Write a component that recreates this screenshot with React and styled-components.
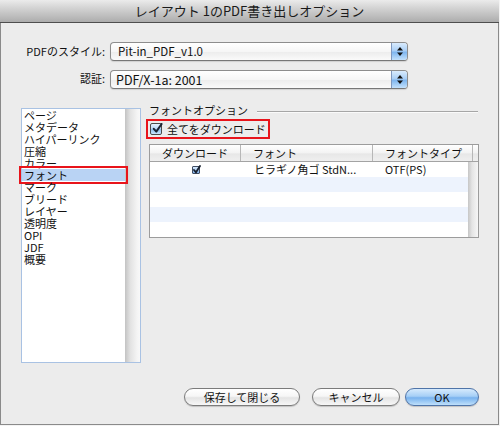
import React from 'react';
import styled, { createGlobalStyle } from 'styled-components';

const Global = createGlobalStyle`
  html, body { margin: 0; padding: 0; background: #f3f3f3; }
  body { font-family: "Noto Sans CJK JP", "DejaVu Sans", sans-serif; color: #111; }
  * { box-sizing: border-box; }
`;

const Window = styled.div`
  width: 499px;
  height: 425px;
  background: #ececec;
  border: 1px solid #8a8a8a;
  border-top: none;
  display: flex;
  flex-direction: column;
`;

const TitleBar = styled.div`
  height: 23px;
  margin: 0 -1px;
  border-bottom: 1px solid #4e4e4e;
  background: linear-gradient(#ebebeb, #d4d4d4 35%, #b9b9b9 80%, #acacac);
  text-align: center;
  font-size: 13px;
  line-height: 22px;
  color: #1a1a1a;
`;

const FormGrid = styled.div`
  display: grid;
  grid-template-columns: 84px 298px;
  column-gap: 5px;
  row-gap: 9px;
  margin: 19px 0 0 20px;
  align-items: center;
`;

const Label = styled.div`
  text-align: right;
  font-size: 11px;
  line-height: 19px;
  margin-top: ${p => p.$up || 0}px;
`;

const Popup = styled.div`
  height: 19px;
  border: 1px solid #8d8d8d;
  border-bottom-color: #777;
  border-radius: 4px;
  background: linear-gradient(#ffffff, #f6f6f6 50%, #ececec 52%, #fafafa);
  box-shadow: 0 1px 1px rgba(0, 0, 0, 0.12);
  display: flex;
  overflow: hidden;
`;

const PopupText = styled.div`
  flex: 1;
  padding-left: ${p => p.$pad}px;
  font-size: ${p => p.$size}px;
  line-height: 17px;
`;

const PopupArrows = styled.div`
  width: 16px;
  border-left: 1px solid #7f98bf;
  background: linear-gradient(#d9ebfd, #aacff6 45%, #7fb6ef 55%, #c3e1fc);
  display: flex;
  align-items: center;
  justify-content: center;
`;

const Main = styled.div`
  display: flex;
  align-items: flex-start;
  gap: 8px;
  margin: 14px 0 0 20px;
`;

const ListBox = styled.div`
  margin-top: 5px;
  width: 120px;
  height: 255px;
  border: 1px solid #a9c2e3;
  background: #fff;
  display: flex;
`;

const ListItems = styled.div`
  flex: 1;
`;

const ListItem = styled.div`
  height: 12px;
  line-height: 12px;
  font-size: 11px;
  padding-left: 2px;
  white-space: nowrap;
  background: ${p => (p.$selected ? '#b9d3f4' : 'transparent')};
  outline: ${p => (p.$selected ? '2px solid #e8141b' : 'none')};
  outline-offset: 1px;
  position: relative;
`;

const ListTrack = styled.div`
  width: 15px;
  background: linear-gradient(to right, #c3c3c3, #e2e2e2 35%, #f4f4f4 80%, #f8f8f8);
`;

const RightPanel = styled.div`
  width: 330px;
  display: flex;
  flex-direction: column;
`;

const GroupHeader = styled.div`
  height: 14px;
  display: flex;
  align-items: center;
  font-size: 11px;
  line-height: 14px;
  padding-right: 1px;
`;

const GroupLine = styled.div`
  flex: 1;
  height: 2px;
  margin-left: 9px;
  margin-top: 4px;
  border-top: 1px solid #a6a6a6;
  border-bottom: 1px solid #fafafa;
`;

const CheckRow = styled.div`
  align-self: flex-start;
  margin: 2px 0 0 -3px;
  height: 20px;
  border: 2px solid #e8141b;
  padding: 0 2px 0 2px;
  display: flex;
  align-items: center;
  gap: 5px;
  font-size: 11px;
  line-height: 14px;
`;

const BigCheck = styled.div`
  width: 12px;
  height: 12px;
  border: 1px solid #4b4b4b;
  border-radius: 2px;
  background: linear-gradient(#e4f1fd, #b6d6f5 50%, #8fc0ee 55%, #c9e3fb);
  position: relative;
`;

const SmallCheck = styled.div`
  width: 8px;
  height: 8px;
  border: 1px solid #3f4c63;
  border-radius: 1px;
  background: linear-gradient(#d9ebfd, #7eaee6);
  position: relative;
`;

const CheckMark = styled.svg`
  position: absolute;
  left: ${p => p.$l}px;
  top: ${p => p.$t}px;
`;

const Table = styled.div`
  margin-top: 5px;
  width: 330px;
  border: 1px solid #9c9c9c;
  background: #fff;
`;

const HeaderRow = styled.div`
  display: grid;
  grid-template-columns: 91px 132px 100px 5px;
  height: 17px;
  border-bottom: 1px solid #a3a3a3;
  background: linear-gradient(#ffffff, #f3f3f3 50%, #e7e7e7 55%, #efefef);
`;

const HeaderCell = styled.div`
  font-size: 11px;
  line-height: 16px;
  border-right: ${p => (p.$last ? 'none' : '1px solid #b7b7b7')};
  text-align: ${p => (p.$center ? 'center' : 'left')};
  padding-left: ${p => p.$pad || 0}px;
  white-space: nowrap;
  overflow: hidden;
`;

const TableBody = styled.div`
  display: flex;
`;

const Rows = styled.div`
  width: 318px;
`;

const Row = styled.div`
  display: grid;
  grid-template-columns: 91px 132px 95px;
  height: 15px;
  background: ${p => (p.$alt ? '#edf3fd' : '#fff')};
`;

const Cell = styled.div`
  font-size: 11px;
  line-height: 15px;
  padding-left: ${p => p.$pad || 0}px;
  display: flex;
  align-items: center;
  justify-content: ${p => (p.$center ? 'center' : 'flex-start')};
  white-space: nowrap;
`;

const TableTrack = styled.div`
  width: 10px;
  background: linear-gradient(to right, #c6c6c6, #e4e4e4 40%, #f6f6f6);
`;

const Footer = styled.div`
  margin-top: auto;
  display: flex;
  justify-content: flex-end;
  padding: 0 19px 18px 0;
`;

const Button = styled.div`
  width: ${p => p.$w}px;
  margin-right: ${p => p.$mr || 0}px;
  height: 18px;
  border-radius: 9px;
  border: 1px solid ${p => (p.$primary ? '#4f74a8' : '#7b7b7b')};
  background: ${p =>
    p.$primary
      ? 'linear-gradient(#d5eafd, #a6cff6 45%, #78b2ee 55%, #bfe0fb)'
      : 'linear-gradient(#ffffff, #f6f6f6 45%, #e4e4e4 55%, #f7f7f7)'};
  box-shadow: 0 1px 1px rgba(0, 0, 0, 0.18);
  font-size: 11px;
  line-height: 16px;
  text-align: center;
`;

const Arrows = () => (
  <svg width="8" height="11" viewBox="0 0 8 11">
    <path d="M4 1 L7 4.5 L1 4.5 Z" fill="#111" />
    <path d="M4 10 L7 6.5 L1 6.5 Z" fill="#111" />
  </svg>
);

const listItems = [
  'ページ', 'メタデータ', 'ハイパーリンク', '圧縮', 'カラー', 'フォント',
  'マーク', 'ブリード', 'レイヤー', '透明度', 'OPI', 'JDF', '概要',
];

export default function App() {
  return (
    <>
      <Global />
      <Window>
        <TitleBar>レイアウト 1のPDF書き出しオプション</TitleBar>
        <FormGrid>
          <Label>PDFのスタイル:</Label>
          <Popup>
            <PopupText $pad={7} $size={11.5}>Pit-in_PDF_v1.0</PopupText>
            <PopupArrows><Arrows /></PopupArrows>
          </Popup>
          <Label $up={-3}>認証:</Label>
          <Popup>
            <PopupText $pad={5} $size={12.5}>PDF/X-1a: 2001</PopupText>
            <PopupArrows><Arrows /></PopupArrows>
          </Popup>
        </FormGrid>
        <Main>
          <ListBox>
            <ListItems>
              {listItems.map(t => (
                <ListItem key={t} $selected={t === 'フォント'}>{t}</ListItem>
              ))}
            </ListItems>
            <ListTrack />
          </ListBox>
          <RightPanel>
            <GroupHeader>
              フォントオプション
              <GroupLine />
            </GroupHeader>
            <CheckRow>
              <BigCheck>
                <CheckMark $l={1} $t={-1} width="11" height="11" viewBox="0 0 11 11">
                  <path d="M1.8 5.8 L4.3 8.6 L9.6 1" stroke="#1b2433" strokeWidth="2" fill="none" strokeLinecap="round" strokeLinejoin="round" />
                </CheckMark>
              </BigCheck>
              全てをダウンロード
            </CheckRow>
            <Table>
              <HeaderRow>
                <HeaderCell $center>ダウンロード</HeaderCell>
                <HeaderCell $pad={12}>フォント</HeaderCell>
                <HeaderCell $pad={12}>フォントタイプ</HeaderCell>
                <HeaderCell $last />
              </HeaderRow>
              <TableBody>
                <Rows>
                  <Row>
                    <Cell $center>
                      <SmallCheck>
                        <CheckMark $l={0} $t={-2} width="8" height="9" viewBox="0 0 8 9">
                          <path d="M1 5 L3 7.3 L7 1" stroke="#17202e" strokeWidth="1.8" fill="none" strokeLinecap="round" strokeLinejoin="round" />
                        </CheckMark>
                      </SmallCheck>
                    </Cell>
                    <Cell $pad={13}>ヒラギノ角ゴ StdN...</Cell>
                    <Cell $pad={12}>OTF(PS)</Cell>
                  </Row>
                  <Row $alt />
                  <Row />
                  <Row $alt />
                  <Row />
                </Rows>
                <TableTrack />
              </TableBody>
            </Table>
          </RightPanel>
        </Main>
        <Footer>
          <Button $w={116} $mr={12}>保存して閉じる</Button>
          <Button $w={88} $mr={5}>キャンセル</Button>
          <Button $w={74} $primary>OK</Button>
        </Footer>
      </Window>
    </>
  );
}
